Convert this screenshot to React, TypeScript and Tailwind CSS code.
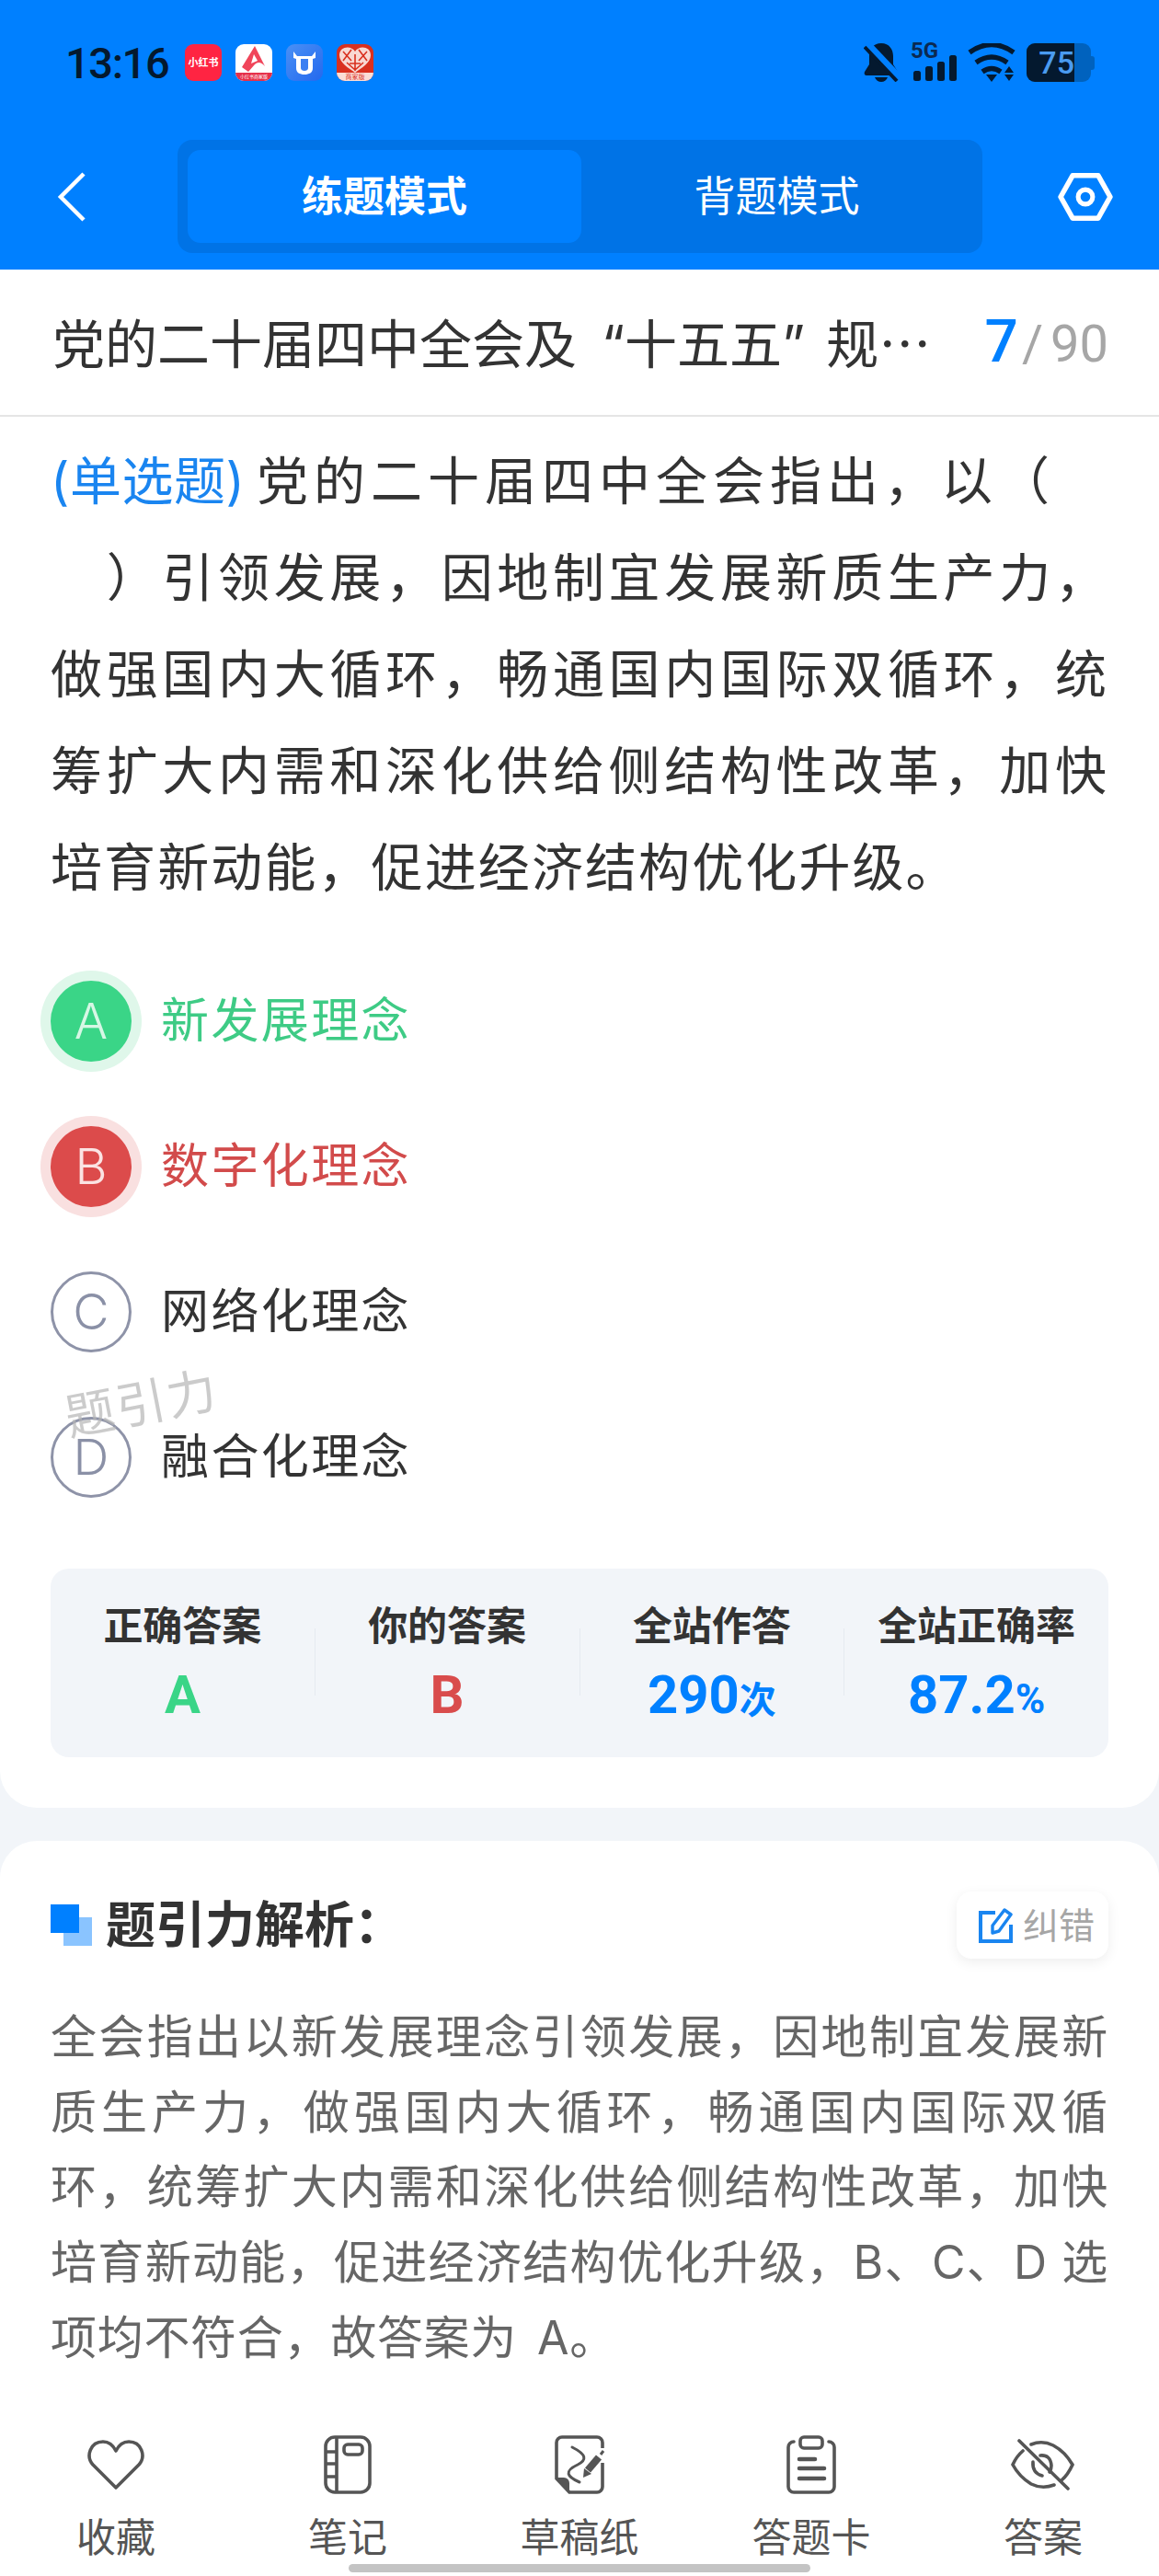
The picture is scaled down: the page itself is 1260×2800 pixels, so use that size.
import type { ReactNode } from "react";

const options = [
  { key: "A", text: "新发展理念", circle: "bg-[#3AD587] text-[#D6F7E5] shadow-[0_0_0_11px_#DFF7EA]", label: "text-[#3ECB85]" },
  { key: "B", text: "数字化理念", circle: "bg-[#DC4B4B] text-[#FBE3E3] shadow-[0_0_0_11px_#F9E0E0]", label: "text-[#D24B4B]" },
  { key: "C", text: "网络化理念", circle: "border-[3px] border-[#8E93A8] text-[#8A90A6]", label: "text-[#333333]" },
  { key: "D", text: "融合化理念", circle: "border-[3px] border-[#8E93A8] text-[#8A90A6]", label: "text-[#333333]" },
];

function AppIcons() {
  return (
    <div className="flex gap-[15px]">
      <div className="w-[40px] h-[40px] rounded-[9px] bg-[#FF2442] flex items-center justify-center text-white text-[11px] font-bold leading-none whitespace-nowrap">
        小红书
      </div>
      <div className="w-[40px] h-[40px] rounded-[9px] bg-white overflow-hidden flex flex-col">
        <svg viewBox="0 0 40 31" className="w-[40px] h-[31px]">
          <path d="M21 2 L32 24 C28 19 24 19 21 22 L14 30 L7 25 Z" fill="#F0455A" />
          <path d="M20 11 L24 18 L17 21 Z" fill="#fff" />
        </svg>
        <div className="flex-1 bg-[#E6304A] text-white text-[5px] leading-[9px] text-center whitespace-nowrap">小红书商家版</div>
      </div>
      <div className="w-[40px] h-[40px] rounded-[9px] bg-gradient-to-br from-[#4A90F5] to-[#2468EE] flex items-center justify-center">
        <svg viewBox="0 0 40 40" className="w-[40px] h-[40px]">
          <path d="M8 8 L12 13 H28 L32 8 L32 15 L29 16 V26 C29 31 25 33 20 33 C15 33 11 31 11 26 V16 L8 15 Z" fill="#fff" />
          <path d="M16 16 H24 V26 C24 28 22 29 20 29 C18 29 16 28 16 26 Z" fill="#3B7FF2" />
        </svg>
      </div>
      <div className="w-[40px] h-[40px] rounded-[9px] bg-[#D9301F] overflow-hidden flex flex-col">
        <svg viewBox="0 0 40 31" className="w-[40px] h-[31px]">
          <path d="M20 8 C16 1 3 2 3 12 C3 20 13 26 20 31 C27 26 37 20 37 12 C37 2 24 1 20 8 Z" fill="#F8D8D2" />
          <path d="M7 8 L16 18 M16 6 L7 18 M24 6 L33 18 M33 8 L24 18 M20 11 V29 M14 21 H26 M11 20 L20 28 L29 20" stroke="#D9301F" strokeWidth="1.6" fill="none" />
        </svg>
        <div className="flex-1 bg-[#FBDDD6] text-[#D9301F] text-[7px] leading-[9px] text-center whitespace-nowrap">商家版</div>
      </div>
    </div>
  );
}

function StatusIcons() {
  return (
    <div className="flex items-center ml-auto">
      <svg viewBox="0 0 38 42" className="w-[38px] h-[42px]">
        <path d="M19 0 C10 0 6 7 6 14 V23 L1 31 C0 33 1 35 3 35 H35 C37 35 38 33 37 31 L32 23 V14 C32 7 28 0 19 0 Z" fill="#04192F" />
        <path d="M12 37 H26 C25 40 22 42 19 42 C16 42 13 40 12 37 Z" fill="#04192F" />
        <path d="M4 1 L40 39" stroke="#0080FF" strokeWidth="8" />
        <path d="M1 4 L36 41" stroke="#04192F" strokeWidth="4" />
      </svg>
      <div className="relative w-[50px] h-[42px] ml-[13px]">
        <span className="absolute left-0 top-[-4px] text-[24px] leading-[24px] font-bold text-[#0B2A52] font-['Roboto',sans-serif]">5G</span>
        <svg viewBox="0 0 50 42" className="w-[50px] h-[42px]">
          <rect x="3" y="30" width="8" height="11" rx="2.5" fill="#04192F" />
          <rect x="16" y="25" width="8" height="16" rx="2.5" fill="#04192F" />
          <rect x="29" y="20" width="8" height="21" rx="2.5" fill="#04192F" />
          <rect x="42" y="13" width="8" height="28" rx="2.5" fill="#04192F" />
        </svg>
      </div>
      <svg viewBox="0 0 52 42" className="w-[52px] h-[42px] ml-[12px]">
        <path d="M2 10 Q26 -7 50 10" stroke="#04192F" strokeWidth="5.5" fill="none" />
        <path d="M9 21 Q26 9 43 21" stroke="#04192F" strokeWidth="5.5" fill="none" />
        <path d="M16 31 Q26 24 36 31" stroke="#04192F" strokeWidth="5.5" fill="none" />
        <path d="M20 34 H32 L26 42 Z" fill="#04192F" />
        <path d="M45 25 L40 32 H50 Z M40 34 H50 L45 41 Z" fill="#04192F" />
      </svg>
      <div className="flex items-center ml-[12px]">
        <div className="w-[70px] h-[42px] rounded-[9px] bg-[#0062BE] overflow-hidden">
          <div className="w-[52px] h-[42px] bg-[#04192F] flex items-center justify-end text-[#4A9BF0] text-[34px] leading-none font-medium font-['Roboto',sans-serif] whitespace-nowrap">
            75
          </div>
        </div>
        <div className="w-[4px] h-[15px] rounded-r-[3px] bg-[#0062BE]" />
      </div>
    </div>
  );
}

function Header() {
  return (
    <header className="h-[293px] shrink-0 bg-[#0080FF]">
      <div className="h-[136px] pl-[71px] pr-[70px] flex items-center">
        <span className="w-[130px] text-[47px] leading-none tracking-[-1.4px] font-medium text-[#04192F] font-['Roboto',sans-serif]">13:16</span>
        <AppIcons />
        <StatusIcons />
      </div>
      <div className="flex pt-[16px]">
        <div className="w-[193px] h-[123px] pl-[62px] flex items-center">
          <svg viewBox="0 0 32 56" className="w-[32px] h-[56px]">
            <path d="M29 3 L4 28 L29 53" stroke="#fff" strokeWidth="4.5" fill="none" />
          </svg>
        </div>
        <div className="w-[875px] h-[123px] rounded-[16px] bg-[#0073E6] p-[11px] flex">
          <div className="w-[428px] rounded-[14px] bg-[#0080FF] flex items-center justify-center text-white text-[45px] font-bold leading-none">
            练题模式
          </div>
          <div className="flex-1 flex items-center justify-center text-white text-[45px] leading-none">背题模式</div>
        </div>
        <div className="flex-1 h-[123px] pl-[82px] flex items-center">
          <svg viewBox="0 0 64 56" className="w-[60px] h-[52px]">
            <path d="M3 28 L17 3 H47 L61 28 L47 53 H17 Z" stroke="#fff" strokeWidth="6" strokeLinejoin="round" fill="none" />
            <circle cx="32" cy="28" r="8.5" stroke="#fff" strokeWidth="5.5" fill="none" />
          </svg>
        </div>
      </div>
    </header>
  );
}

function Stat({ label, children }: { label: string; children: ReactNode }) {
  return (
    <div className="flex-1 flex flex-col items-center pt-[32px]">
      <div className="text-[43px] leading-[60px] font-bold text-[#333333] whitespace-nowrap">{label}</div>
      <div className="mt-[10px] h-[70px] flex items-baseline font-bold leading-[70px] text-[58px] font-['Roboto','Noto_Sans_CJK_SC',sans-serif]">
        {children}
      </div>
    </div>
  );
}

const Divider = () => <div className="w-[1px] h-[73px] mt-[65px] bg-[#E6EAF0]" />;

function Question() {
  return (
    <section className="shrink-0 bg-white rounded-b-[40px] px-[55px] pt-[18px] pb-[55px]">
      <p className="text-[56px] leading-[105px] text-[#333333] tracking-[2.1px]">
        <span className="block whitespace-nowrap tracking-[6px]">
          <span className="inline-block w-[212px] mr-[12px] text-[#1A85F0] tracking-[0.5px]">(单选题)</span>
          党的二十届四中全会指出，以（
        </span>
        <span className="block text-justify">
          {"\u3000"}）引领发展，因地制宜发展新质生产力，做强国内大循环，畅通国内国际双循环，统筹扩大内需和深化供给侧结构性改革，加快培育新动能，促进经济结构优化升级。
        </span>
      </p>
      <div className="relative mt-[35px]">
        {options.map((o) => (
          <div key={o.key} className="h-[158px] flex items-center">
            <div className={`w-[88px] h-[88px] rounded-full flex items-center justify-center text-[54px] font-light leading-none ${o.circle}`}>
              {o.key}
            </div>
            <span className={`ml-[32px] text-[52px] leading-none tracking-[2.4px] ${o.label}`}>{o.text}</span>
          </div>
        ))}
        <div className="absolute left-[15px] top-[468px] -rotate-[11deg] text-[54px] leading-none text-[#B5B5B5]/70 tracking-[2px] whitespace-nowrap">
          题引力
        </div>
      </div>
      <div className="mt-[42px] h-[205px] rounded-[20px] bg-[#F2F5F9] flex">
        <Stat label="正确答案">
          <span className="text-[#3AD587]">A</span>
        </Stat>
        <Divider />
        <Stat label="你的答案">
          <span className="text-[#D94C4C]">B</span>
        </Stat>
        <Divider />
        <Stat label="全站作答">
          <span className="text-[#0080FF]">290</span>
          <span className="text-[#0080FF] text-[40px]">次</span>
        </Stat>
        <Divider />
        <Stat label="全站正确率">
          <span className="text-[#0080FF]">87.2</span>
          <span className="text-[#0080FF] text-[44px]">%</span>
        </Stat>
      </div>
    </section>
  );
}

function HeartIcon() {
  return (
    <svg viewBox="0 0 64 56" className="w-[64px] h-[56px]">
      <path d="M32 53 L7 28 C-1 19 4 3 18 3 C25 3 29 7 32 13 C35 7 39 3 46 3 C60 3 65 19 57 28 Z" stroke="#555" strokeWidth="3.6" strokeLinejoin="round" fill="none" />
    </svg>
  );
}

function NoteIcon() {
  return (
    <svg viewBox="0 0 52 64" className="w-[52px] h-[64px]">
      <rect x="2" y="2" width="48" height="60" rx="10" stroke="#555" strokeWidth="3.6" fill="none" />
      <path d="M14 2 V62 M2 18 H14 M2 31 H14 M2 45 H14" stroke="#555" strokeWidth="3.6" fill="none" />
      <rect x="22" y="10" width="20" height="11" rx="4" stroke="#555" strokeWidth="3.6" fill="none" />
    </svg>
  );
}

function DraftIcon() {
  return (
    <svg viewBox="0 0 56 64" className="w-[56px] h-[64px]">
      <path d="M53 14 V8 A6 6 0 0 0 47 2 H9 A6 6 0 0 0 3 8 V47 L17 62 H47 A6 6 0 0 0 53 56 V30" stroke="#555" strokeWidth="3.6" fill="none" />
      <path d="M3 46 H11 A6 6 0 0 1 17 52 V62 Z" fill="#555" />
      <path d="M20 13 C36 21 36 27 26 32 C11 39 14 45 28 51" stroke="#555" strokeWidth="3" strokeLinecap="round" fill="none" />
      <path d="M37 38 L49 24" stroke="#555" strokeWidth="8" />
      <path d="M32 46 L33 36 L41 42 Z" fill="#555" />
      <path d="M51 21 L54 17" stroke="#555" strokeWidth="3" />
    </svg>
  );
}

function CardIcon() {
  return (
    <svg viewBox="0 0 56 64" className="w-[56px] h-[64px]">
      <path d="M9 7 A6 6 0 0 0 3 13 V56 A6 6 0 0 0 9 62 H47 A6 6 0 0 0 53 56 V13 A6 6 0 0 0 47 7" stroke="#555" strokeWidth="3.6" strokeLinecap="round" fill="none" />
      <rect x="16" y="2" width="24" height="12" rx="4" stroke="#555" strokeWidth="3.6" fill="none" />
      <path d="M15 26 H32 M15 36 H42 M15 47 H42" stroke="#555" strokeWidth="4.6" strokeLinecap="round" fill="none" />
    </svg>
  );
}

function EyeOffIcon() {
  return (
    <svg viewBox="0 0 70 56" className="w-[70px] h-[56px]">
      <path d="M22 6 Q34 1 46 7 Q59 14 67 28 Q62 39 55 45" stroke="#555" strokeWidth="3.6" strokeLinecap="round" fill="none" />
      <path d="M47 50 Q34 55 22 49 Q9 41 2 28 Q6 19 13 13" stroke="#555" strokeWidth="3.6" strokeLinecap="round" fill="none" />
      <path d="M32 18 Q43 17 44 29 Q44 33 42 36 M24 25 Q23 37 34 40" stroke="#555" strokeWidth="3.6" strokeLinecap="round" fill="none" />
      <path d="M9 2 L62 54" stroke="#555" strokeWidth="3.6" strokeLinecap="round" />
    </svg>
  );
}

const tabs = [
  { label: "收藏", icon: <HeartIcon /> },
  { label: "笔记", icon: <NoteIcon /> },
  { label: "草稿纸", icon: <DraftIcon /> },
  { label: "答题卡", icon: <CardIcon /> },
  { label: "答案", icon: <EyeOffIcon /> },
];

function Analysis() {
  return (
    <section className="flex-1 mt-[36px] bg-white rounded-t-[40px] flex flex-col">
      <div className="px-[55px] pt-[55px] flex items-center justify-between">
        <div className="flex items-center">
          <div className="relative w-[45px] h-[45px]">
            <div className="absolute left-[14px] top-[14px] w-[31px] h-[31px] bg-[#8AC4FF]" />
            <div className="absolute left-0 top-0 w-[31px] h-[31px] bg-[#0080FF]" />
          </div>
          <span className="ml-[15px] text-[54px] leading-none font-bold text-[#333333]">题引力解析：</span>
        </div>
        <div className="w-[165px] h-[73px] rounded-[16px] bg-white shadow-[0_4px_14px_rgba(0,0,0,0.07)] flex items-center pl-[23px]">
          <svg viewBox="0 0 38 40" className="w-[38px] h-[40px]">
            <path d="M19 6 H3 V37 H36 V19" stroke="#1A85F0" strokeWidth="4" fill="none" />
            <path d="M16 28 L16 20 L29 3 L36 8 L23 26 Z" stroke="#1A85F0" strokeWidth="3.4" strokeLinejoin="round" fill="none" />
          </svg>
          <span className="ml-[11px] text-[39px] leading-none text-[#A6A6A6] whitespace-nowrap">纠错</span>
        </div>
      </div>
      <p className="mt-[45px] px-[55px] text-[50px] leading-[81.7px] tracking-[0.7px] text-[#666666] text-justify">
        全会指出以新发展理念引领发展，因地制宜发展新质生产力，做强国内大循环，畅通国内国际双循环，统筹扩大内需和深化供给侧结构性改革，加快培育新动能，促进经济结构优化升级，B、C、D 选项均不符合，故答案为<span className="ml-[22px]">A。</span>
      </p>
      <div className="mt-auto">
        <div className="grid grid-cols-5">
          {tabs.map((t) => (
            <div key={t.label} className="flex flex-col items-center">
              <div className="h-[64px] flex items-center justify-center">{t.icon}</div>
              <span className="mt-[22px] text-[43px] leading-[50px] text-[#555555]">{t.label}</span>
            </div>
          ))}
        </div>
        <div className="mt-[4px] mb-[4px] mx-auto w-[502px] h-[9px] rounded-full bg-[#C4C4C4]" />
      </div>
    </section>
  );
}

export default function App() {
  return (
    <div lang="zh-CN" className="w-[1260px] h-[2800px] overflow-hidden bg-[#F2F5F9] flex flex-col font-['Inter','Noto_Sans_CJK_SC',sans-serif]">
      <Header />
      <div className="h-[160px] shrink-0 bg-white border-b-2 border-[#E5E5E5] pl-[57px] pr-[55px] flex items-center justify-between">
        <span className="text-[57px] leading-none text-[#333333] whitespace-nowrap">
          党的二十届四中全会及<span className="ml-[27px]">“十五五”</span>
          <span className="ml-[23px]">规</span>
          <span className="font-['Noto_Sans_CJK_SC',sans-serif]">…</span>
        </span>
        <span className="flex items-baseline whitespace-nowrap leading-none font-['Roboto',sans-serif]">
          <span className="text-[64px] font-medium text-[#0080FF]">7</span>
          <span className="ml-[4px] text-[56px] text-[#A6A6A6]">/</span>
          <span className="ml-[8px] text-[56px] text-[#A6A6A6]">90</span>
        </span>
      </div>
      <Question />
      <Analysis />
    </div>
  );
}
